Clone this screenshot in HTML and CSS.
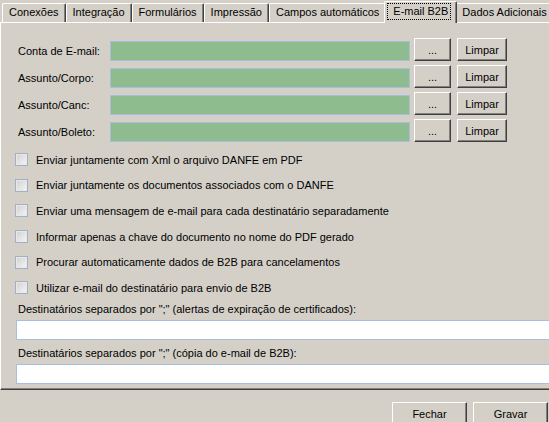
FILE: index.html
```html
<!DOCTYPE html>
<html lang="pt-BR">
<head>
    <meta charset="UTF-8">
    <title>Configurações - E-mail B2B</title>
    <link rel="stylesheet" href="styles.css">
</head>
<body>
    <div class="tabs">
        <div class="tab">Conexões</div>
        <div class="tab">Integração</div>
        <div class="tab">Formulários</div>
        <div class="tab">Impressão</div>
        <div class="tab">Campos automáticos</div>
        <div class="tab tab-active"><span class="tab-focus">E-mail B2B</span></div>
        <div class="tab">Dados Adicionais</div>
    </div>

    <div class="panel">
        <div class="fields">
            <div class="field-row">
                <label class="field-label">Conta de E-mail:</label>
                <div class="field-input"></div>
                <button class="btn btn-browse">...</button>
                <button class="btn btn-clear">Limpar</button>
            </div>
            <div class="field-row">
                <label class="field-label">Assunto/Corpo:</label>
                <div class="field-input"></div>
                <button class="btn btn-browse">...</button>
                <button class="btn btn-clear">Limpar</button>
            </div>
            <div class="field-row">
                <label class="field-label">Assunto/Canc:</label>
                <div class="field-input"></div>
                <button class="btn btn-browse">...</button>
                <button class="btn btn-clear">Limpar</button>
            </div>
            <div class="field-row">
                <label class="field-label">Assunto/Boleto:</label>
                <div class="field-input"></div>
                <button class="btn btn-browse">...</button>
                <button class="btn btn-clear">Limpar</button>
            </div>
        </div>

        <ul class="options">
            <li class="option"><span class="check"></span>Enviar juntamente com Xml o arquivo DANFE em PDF</li>
            <li class="option"><span class="check"></span>Enviar juntamente os documentos associados com o DANFE</li>
            <li class="option"><span class="check"></span>Enviar uma mensagem de e-mail para cada destinatário separadamente</li>
            <li class="option"><span class="check"></span>Informar apenas a chave do documento no nome do PDF gerado</li>
            <li class="option"><span class="check"></span>Procurar automaticamente dados de B2B para cancelamentos</li>
            <li class="option"><span class="check"></span>Utilizar e-mail do destinatário para envio de B2B</li>
        </ul>

        <div class="recipients">
            <label class="recipient-label">Destinatários separados por ";" (alertas de expiração de certificados):</label>
            <div class="text-input"></div>
            <label class="recipient-label">Destinatários separados por ";" (cópia do e-mail de B2B):</label>
            <div class="text-input"></div>
        </div>
    </div>

    <div class="footer">
        <button class="btn btn-footer">Fechar</button>
        <button class="btn btn-footer">Gravar</button>
    </div>
</body>
</html>
```

FILE: styles.css
```css
:root {
    /* cores do Windows clássico */
    --face: #D4D0C8;
    --highlight: #FFFFFF;
    --shadow: #808080;
    --dark-shadow: #404040;
    --field-green: #8FBC8F;
    --field-border: #A7BEDC;
}

* {
    margin: 0;
    padding: 0;
    box-sizing: border-box;
}

body {
    width: 549px;
    height: 422px;
    overflow: hidden;
    background: var(--face);
    font-family: "Liberation Sans", Arial, sans-serif;
    font-size: 11px;
    color: #000;
}

/* abas */
.tabs {
    display: flex;
    align-items: flex-end;
    height: 22px;
    padding-left: 2px;
    position: relative;
    z-index: 1;
}

.tab {
    flex-shrink: 0;
    height: 19px;
    padding: 0 6px;
    line-height: 17px;
    white-space: nowrap;
    background: var(--face);
    border-top: 1px solid var(--highlight);
    border-left: 1px solid var(--highlight);
    border-right: 1px solid var(--dark-shadow);
    box-shadow: inset -1px 0 var(--shadow);
    border-radius: 2px 2px 0 0;
}

.tab-active {
    height: 22px;
    margin: 0 -2px -1px;
    padding: 1px 5px 0 2px;
    position: relative;
    z-index: 2;
}

.tab-focus {
    display: inline-block;
    padding: 1px 3px 1px 6px;
    line-height: 15px;
    outline: 1px dotted #000;
    outline-offset: -1px;
}

/* painel */
.panel {
    width: 580px;
    height: 368px;
    padding: 15px 0 0 17px;
    border-top: 1px solid var(--highlight);
    border-left: 1px solid var(--highlight);
    border-bottom: 1px solid var(--dark-shadow);
    box-shadow: inset 0 -1px var(--shadow);
}

.fields {
    display: flex;
    flex-direction: column;
    gap: 4px;
}

.field-row {
    display: flex;
    align-items: flex-end;
    height: 23px;
}

.field-label {
    width: 92px;
    line-height: 20px;
}

.field-input {
    width: 300px;
    height: 20px;
    background: var(--field-green);
    border: 1px solid var(--field-border);
}

.btn {
    height: 23px;
    font: inherit;
    color: #000;
    background: var(--face);
    border: 1px solid;
    border-color: var(--highlight) var(--dark-shadow) var(--dark-shadow) var(--highlight);
    box-shadow: inset -1px -1px var(--shadow);
}

.btn-browse {
    width: 37px;
    margin-left: 4px;
}

.btn-clear {
    width: 50px;
    margin-left: 6px;
}

/* opções */
.options {
    list-style: none;
    margin: 5px 0 0 -3px;
}

.option {
    display: flex;
    align-items: center;
    gap: 8px;
    height: 25.6px;
    white-space: nowrap;
}

.check {
    width: 13px;
    height: 13px;
    flex-shrink: 0;
    border: 1px solid #A0B0C8;
    background: linear-gradient(135deg, #D0D0D0, #F6F6F6);
    box-shadow: inset 0 0 0 1px #E8E8E8;
}

/* destinatários */
.recipient-label {
    display: block;
    line-height: 14px;
    margin-top: 6px;
    white-space: nowrap;
}

.recipient-label:first-child {
    margin-top: 1px;
}

.text-input {
    height: 20px;
    margin: 4px 0 0 -2px;
    background: #FFF;
    border: 1px solid var(--field-border);
}

/* rodapé */
.footer {
    display: flex;
    justify-content: flex-end;
    gap: 6px;
    width: 549px;
    padding: 12px 1px 0 0;
}

.btn-footer {
    width: 75px;
}
```
